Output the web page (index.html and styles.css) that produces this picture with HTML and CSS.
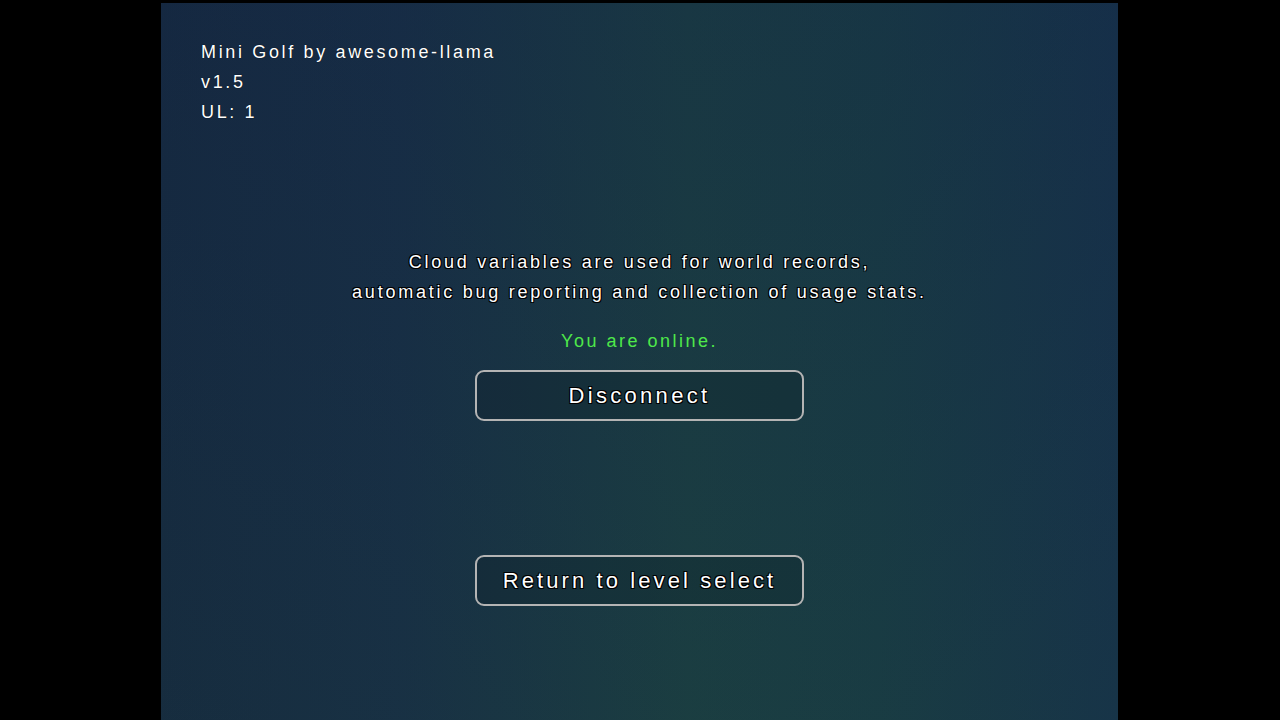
FILE: index.html
```html
<!DOCTYPE html>
<html lang="en">

<head>
    <meta charset="UTF-8">
    <meta name="viewport" content="width=device-width, initial-scale=1.0">
    <title>Mini Golf - Online</title>
    <link rel="stylesheet" href="styles.css">
</head>

<body>
    <div class="stage">
        <div class="credits">
            <div>Mini Golf by awesome-llama</div>
            <div>v1.5</div>
            <div>UL: 1</div>
        </div>

        <div class="cloud-info">
            <p>Cloud variables are used for world records,</p>
            <p>automatic bug reporting and collection of usage stats.</p>
        </div>

        <div class="status online">You are online.</div>

        <button class="menu-button" id="disconnectButton">Disconnect</button>
        <button class="menu-button return" id="returnButton">Return to level select</button>
    </div>
</body>

</html>
```

FILE: styles.css
```css
body {
    margin: 0;
    background-color: #000;
    height: 720px;
    overflow: hidden;
    font-family: "Liberation Sans", Arial, sans-serif;
}

.stage {
    width: 957px;
    height: 717px;
    margin-top: 3px;
    margin-left: 161px;
    padding-top: 34px;
    box-sizing: border-box;
    display: flex;
    flex-direction: column;
    align-items: center;
    color: #fff;
    background:
        linear-gradient(to bottom, rgba(20, 40, 70, 0.25), rgba(30, 70, 60, 0.15)),
        linear-gradient(to right, #15283f 0%, #172d45 25%, #1a3c42 55%, #183a44 75%, #16314a 100%);
}

.credits {
    align-self: flex-start;
    margin-left: 40px;
    font-size: 18px;
    line-height: 30px;
    letter-spacing: 2.65px;
    text-shadow: 0 0 1px #000;
}

.cloud-info {
    margin-top: 120px;
    text-align: center;
    font-size: 18px;
    line-height: 30px;
    letter-spacing: 2.75px;
    text-shadow: 1px 1px 0 #000, -1px -1px 0 #000, 1px -1px 0 #000, -1px 1px 0 #000;
}

.cloud-info p {
    margin: 0;
}

.status {
    margin-top: 19px;
    font-size: 18px;
    line-height: 30px;
    letter-spacing: 2.5px;
}

.online {
    color: #4ee84a;
}

.menu-button {
    margin-top: 14px;
    width: 329px;
    height: 51px;
    background-color: rgba(0, 0, 0, 0.12);
    border: 2px solid #b4b4b4;
    border-radius: 9px;
    color: #fff;
    font-family: "Liberation Sans", Arial, sans-serif;
    font-size: 22px;
    letter-spacing: 3.3px;
    text-shadow: 1px 1px 0 #000, -1px -1px 0 #000, 1px -1px 0 #000, -1px 1px 0 #000;
    cursor: pointer;
}

.return {
    margin-top: 134px;
    letter-spacing: 3.1px;
}
```
